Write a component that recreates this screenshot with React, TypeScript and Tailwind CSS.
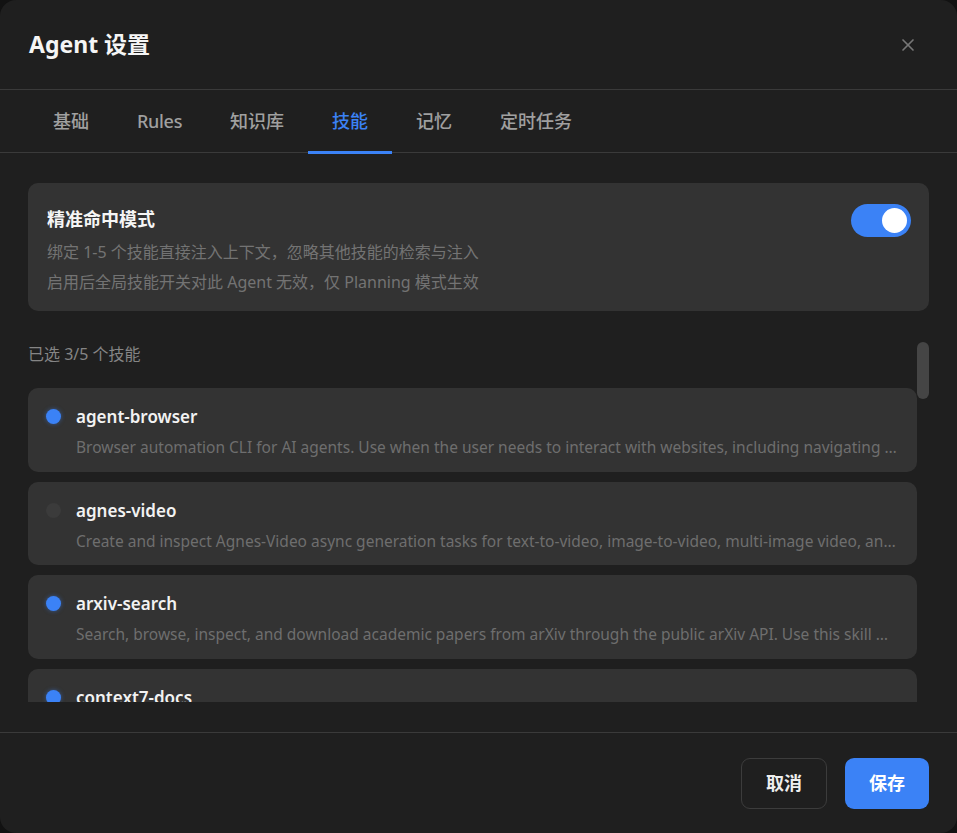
import { X } from "lucide-react";

const FONT = "font-['Segoe_UI','Noto_Sans','Noto_Sans_CJK_SC',sans-serif]";

const tabs = ["基础", "Rules", "知识库", "技能", "记忆", "定时任务"];

const skills = [
  {
    name: "agent-browser",
    on: true,
    desc: "Browser automation CLI for AI agents. Use when the user needs to interact with websites, including navigating pages, filling forms, clicking buttons, taking screenshots",
  },
  {
    name: "agnes-video",
    on: false,
    desc: "Create and inspect Agnes-Video async generation tasks for text-to-video, image-to-video, multi-image video, and keyframe animation",
  },
  {
    name: "arxiv-search",
    on: true,
    desc: "Search, browse, inspect, and download academic papers from arXiv through the public arXiv API. Use this skill when the user asks for papers",
  },
  {
    name: "context7-docs",
    on: true,
    desc: "Fetch up-to-date library documentation and code examples through Context7 for any programming library or framework",
  },
];

const SkillItem = ({ name, on, desc }: { name: string; on: boolean; desc: string }) => (
  <div className="flex shrink-0 items-start gap-[15px] rounded-[10px] bg-[#333333] pl-[18px] pr-5 pt-[17px] pb-[12.7px]">
    <span
      className={`mt-[4px] h-[15px] w-[15px] shrink-0 rounded-full ${on ? "bg-[#3b82f6] shadow-[0_0_4px_rgba(59,130,246,0.5)]" : "bg-[#3b3b3b]"}`}
    />
    <div className="flex min-w-0 flex-1 flex-col">
      <span className="text-[17px] font-semibold leading-6 text-[#f2f2f2]">{name}</span>
      <span className="mt-[6px] truncate text-[15.5px] leading-6 text-[#6e6e6e]">{desc}</span>
    </div>
  </div>
);

export default function App() {
  return (
    <div className={`h-[833px] w-[957px] bg-[#121212] ${FONT}`}>
      <div className="flex h-full w-full flex-col overflow-hidden rounded-2xl bg-[#1f1f1f]">
        <div className="flex h-[90px] shrink-0 items-center justify-between border-b border-[#3a3a3a] pl-[29px] pr-[39px]">
          <h1 className="text-[23px] font-bold text-[#f5f5f5]">Agent 设置</h1>
          <X className="h-[20px] w-[20px] text-[#777777]" strokeWidth={2} />
        </div>

        <div className="flex h-[63px] shrink-0 border-b border-[#3a3a3a] pl-[29px]">
          {tabs.map((t) => (
            <div
              key={t}
              className={`relative flex h-full items-center px-6 text-[18px] font-medium ${t === "Rules" ? "tracking-[-0.3px]" : ""} ${t === "技能" ? "text-[#3b82f6]" : "text-[#a0a0a0]"}`}
            >
              {t}
              {t === "技能" && <span className="absolute bottom-[-2px] left-0 h-[3px] w-full bg-[#3b82f6]" />}
            </div>
          ))}
        </div>

        <div className="flex min-h-0 flex-1 flex-col px-[28px] pt-[30px] pb-[30px]">
          <div className="flex shrink-0 items-start justify-between rounded-[10px] bg-[#333333] pl-[19px] pr-[18px] pt-6 pb-[14px]">
            <div className="flex flex-col">
              <span className="text-[18px] font-bold leading-6 text-[#f5f5f5]">精准命中模式</span>
              <span className="mt-[6px] text-[16px] leading-[30px] text-[#737373]">
                绑定 1-5 个技能直接注入上下文，忽略其他技能的检索与注入
              </span>
              <span className="text-[16px] leading-[30px] text-[#737373]">
                启用后全局技能开关对此 Agent 无效，仅 Planning 模式生效
              </span>
            </div>
            <div className="mt-[-3px] flex h-[33px] w-[60px] items-center justify-end rounded-full bg-[#3b82f6] pr-[4px]">
              <span className="h-[25px] w-[25px] rounded-full bg-white" />
            </div>
          </div>

          <div className="relative mt-[29px] flex min-h-0 flex-1 flex-col overflow-hidden pr-[12px]">
            <span className="mt-[4px] shrink-0 text-[16px] leading-5 text-[#858585]">已选 3/5 个技能</span>
            <div className="mt-[24px] flex flex-col gap-[10px]">
              {skills.map((s) => (
                <SkillItem key={s.name} {...s} />
              ))}
            </div>
            <div className="absolute right-0 top-[2px] h-[57px] w-[12px] rounded-full bg-[#454545]" />
          </div>
        </div>

        <div className="flex h-[101px] shrink-0 items-center justify-end gap-[18px] border-t border-[#3a3a3a] pr-[28px]">
          <button className="h-[51px] w-[86px] rounded-[9px] border border-[#3c3c3c] text-[18px] font-semibold text-[#eeeeee]">
            取消
          </button>
          <button className="h-[51px] w-[84px] rounded-[9px] bg-[#3b82f6] text-[18px] font-semibold text-white">
            保存
          </button>
        </div>
      </div>
    </div>
  );
}
